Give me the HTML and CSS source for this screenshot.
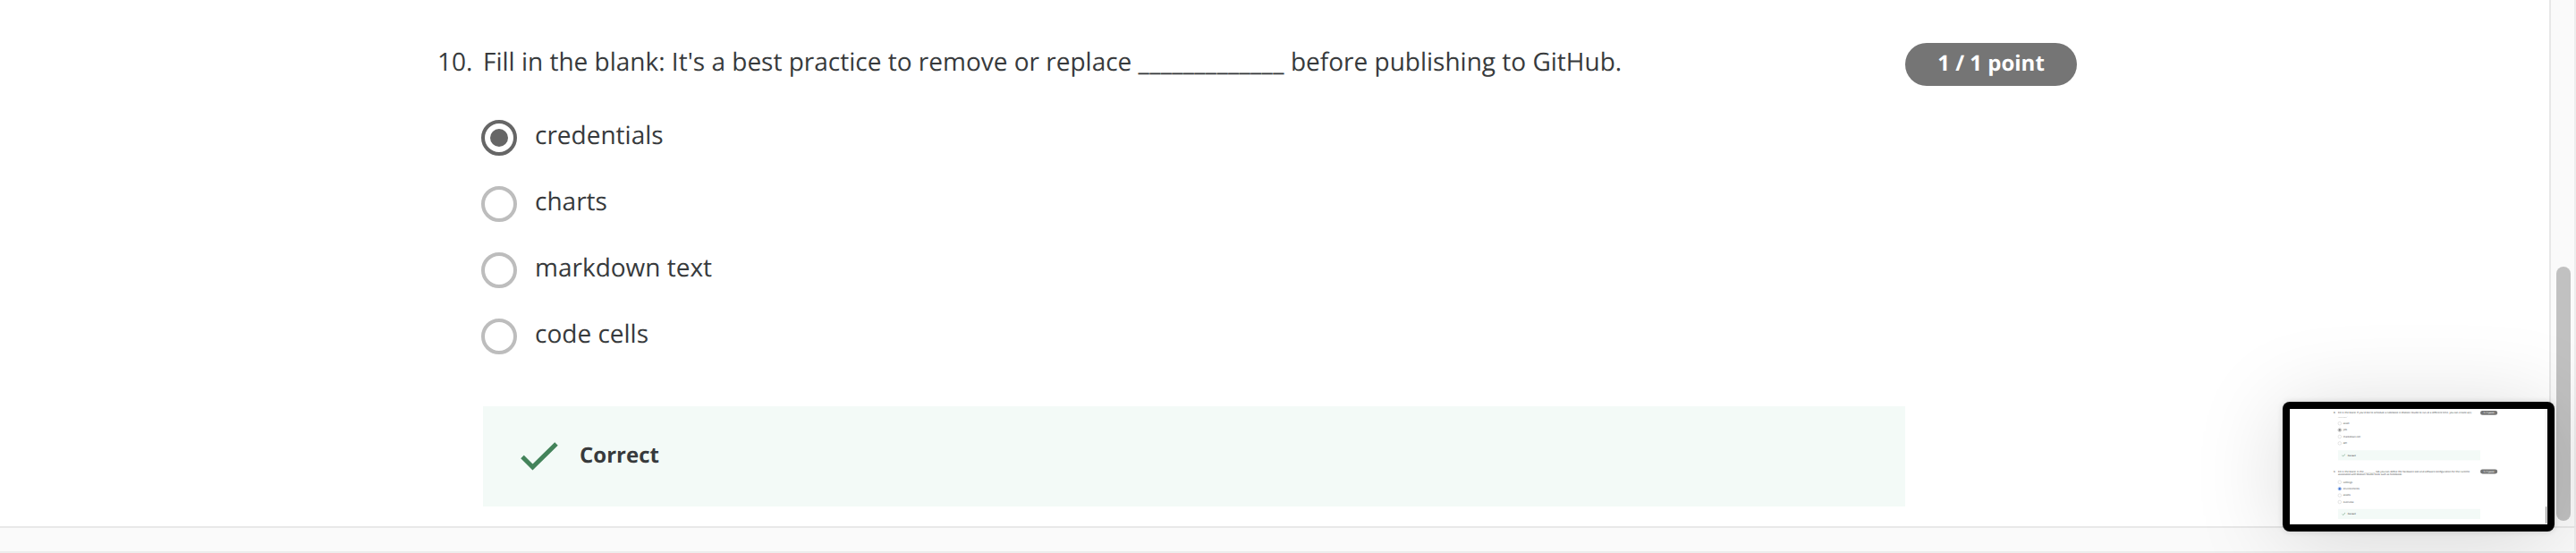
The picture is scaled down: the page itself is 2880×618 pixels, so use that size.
FILE: index.html
```
<!DOCTYPE html>
<html lang="en">
<head>
<meta charset="utf-8">
<title>Quiz</title>
<link rel="stylesheet" href="styles.css">
</head>
<body>
<div class="window">
  <main class="page">
    <section class="question">
      <div class="number">10.</div>
      <div class="body">
        <p class="prompt">Fill in the blank: It's a best practice to remove or replace <span class="blank">_____________</span> before publishing to GitHub.</p>
        <ul class="options">
          <li class="option"><span class="radio checked"></span><span class="label">credentials</span></li>
          <li class="option"><span class="radio"></span><span class="label">charts</span></li>
          <li class="option"><span class="radio"></span><span class="label">markdown text</span></li>
          <li class="option"><span class="radio"></span><span class="label">code cells</span></li>
        </ul>
        <div class="feedback">
          <svg class="check" viewBox="0 0 42 32"><path d="M2 16.5L13.5 28L40 2" fill="none" stroke="#43835a" stroke-width="5"/></svg>
          <strong class="verdict">Correct</strong>
        </div>
      </div>
      <div class="points">1 / 1 point</div>
    </section>
  </main>
  <aside class="track"><div class="thumb"></div></aside>
  <div class="bottom"></div>
</div>

<div class="preview">
  <div class="screen">
    <div class="mini">
      <section class="question">
        <div class="number">8.</div>
        <div class="body">
          <p class="prompt">Fill in the blank: If you'd like to schedule a notebook in Watson Studio to run at a different time, you can create a(n)<br>________.</p>
          <ul class="options">
            <li class="option"><span class="radio"></span><span class="label">asset</span></li>
            <li class="option"><span class="radio checked"></span><span class="label">job</span></li>
            <li class="option"><span class="radio"></span><span class="label">markdown cell</span></li>
            <li class="option"><span class="radio"></span><span class="label">API</span></li>
          </ul>
          <div class="feedback">
            <svg class="check" viewBox="0 0 42 32"><path d="M2 16.5L13.5 28L40 2" fill="none" stroke="#43835a" stroke-width="5"/></svg>
            <strong class="verdict">Correct</strong>
          </div>
        </div>
        <div class="points">1 / 1 point</div>
      </section>
      <section class="question">
        <div class="number">9.</div>
        <div class="body">
          <p class="prompt">Fill in the blank: In the __________ tab you can define the hardware size and software configuration for the runtime<br>associated with Watson Studio tools such as Notebook.</p>
          <ul class="options">
            <li class="option"><span class="radio"></span><span class="label">settings</span></li>
            <li class="option"><span class="radio checked focused"></span><span class="label">environments</span></li>
            <li class="option"><span class="radio"></span><span class="label">assets</span></li>
            <li class="option"><span class="radio"></span><span class="label">overview</span></li>
          </ul>
          <div class="feedback">
            <svg class="check" viewBox="0 0 42 32"><path d="M2 16.5L13.5 28L40 2" fill="none" stroke="#43835a" stroke-width="5"/></svg>
            <strong class="verdict">Correct</strong>
          </div>
        </div>
        <div class="points">1 / 1 point</div>
      </section>
      <div class="mini-track"><div class="mini-thumb"></div></div>
    </div>
  </div>
</div>
</body>
</html>
```
FILE: styles.css
```
* { box-sizing: border-box; }

body {
  margin: 0;
  width: 2880px;
  height: 618px;
  overflow: hidden;
  position: relative;
  background: #fff;
  color: #373a3c;
  font-family: "Open Sans", "Noto Sans", sans-serif;
  font-size: 28px;
  text-rendering: geometricPrecision;
}

.window {
  display: grid;
  grid-template-columns: 2850px 30px;
  grid-template-rows: 588px 30px;
  height: 618px;
}

.page { padding-top: 48px; background: #fff; }

.question {
  display: grid;
  grid-template-columns: 51px 1590px 192px;
  padding-left: 489px;
  align-items: start;
}

.number, .prompt { margin: 0; line-height: 36px; padding-top: 3px; white-space: nowrap; }
.blank { letter-spacing: .28px; }

.options {
  list-style: none;
  margin: 47px 0 58px -2px;
  padding: 0;
  display: flex;
  flex-direction: column;
  gap: 34px;
}

.option { display: flex; align-items: center; height: 40px; gap: 20px; }
.label { line-height: 36px; margin-top: -6px; }

.radio {
  width: 40px;
  height: 40px;
  border: 4px solid #bdbdbd;
  border-radius: 50%;
  display: grid;
  place-items: center;
}
.radio.checked { border-color: #666; }
.radio.checked::after {
  content: "";
  width: 20px;
  height: 20px;
  border-radius: 50%;
  background: #666;
}
.radio.focused { border-color: #6b95dc; background: #a9c4f4; }
.radio.focused::after { background: #2a63c8; }

.feedback {
  height: 112px;
  display: flex;
  align-items: center;
  padding-left: 42px;
  gap: 24px;
  background: #f3faf7;
}
.check { width: 42px; height: 32px; }
.verdict { font-size: 24px; font-weight: 700; line-height: 33px; margin-top: -3px; }

.points {
  height: 48px;
  border-radius: 24px;
  background: #757575;
  color: #fff;
  font-size: 24px;
  font-weight: 700;
  line-height: 45px;
  text-align: center;
}

.track {
  border-left: 2px solid #e8e8e8;
  border-right: 2px solid #ededed;
  background: #fafafa;
  padding: 298px 4px 0 6px;
}
.thumb { width: 16px; height: 284px; border-radius: 8px; background: #c1c1c1; }

.bottom {
  grid-column: 1 / -1;
  border-top: 2px solid #e8e8e8;
  border-right: 2px solid #ededed;
  border-bottom: 2px solid #ededed;
  background: #fafafa;
}

/* Floating preview window */
.preview {
  position: absolute;
  left: 2552px;
  top: 449px;
  width: 304px;
  height: 145px;
  padding: 8px;
  border-radius: 8px;
  background: #000;
  box-shadow: 0 0 6px rgba(0, 0, 0, .15), 0 8px 100px rgba(0, 0, 0, .15);
}
.screen { width: 288px; height: 129px; overflow: hidden; background: #fff; }
.mini {
  position: relative;
  width: 2880px;
  height: 1290px;
  padding-top: 20px;
  transform: scale(.1);
  transform-origin: 0 0;
}
.mini .question + .question { margin-top: 102px; }
.mini-track {
  position: absolute;
  top: 0;
  right: 0;
  width: 30px;
  height: 1290px;
  border-left: 2px solid #e8e8e8;
  background: #fafafa;
  padding: 1090px 10px 0;
}
.mini-thumb { width: 9px; height: 190px; border-radius: 5px; background: #777; }
```
